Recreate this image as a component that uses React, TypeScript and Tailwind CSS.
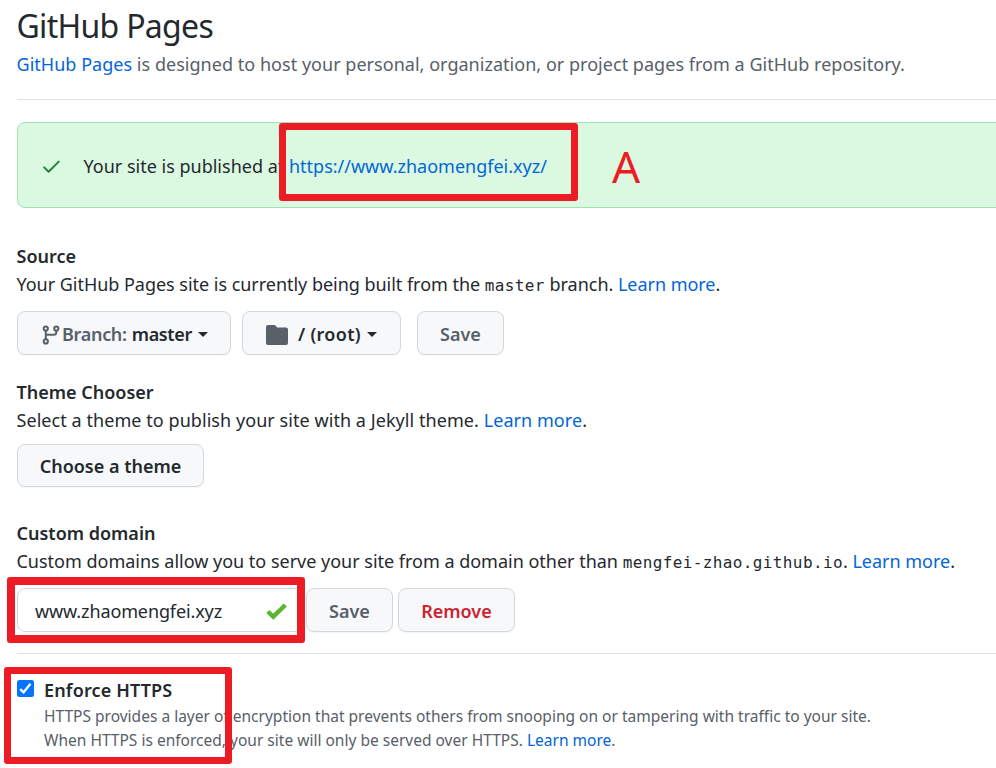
import type { ReactNode } from "react";

function Link({ children }: { children: ReactNode }) {
  return <a className="text-[#0366d6]">{children}</a>;
}

function Code({ children }: { children: ReactNode }) {
  return (
    <code className="font-['DejaVu_Sans_Mono',monospace] text-[16px] leading-none tracking-[0.38px]">{children}</code>
  );
}

function Button({ className, children }: { className: string; children: ReactNode }) {
  return (
    <button
      className={`flex shrink-0 items-center rounded-lg border border-[#d5d8db] bg-[#f6f8fa] font-semibold whitespace-nowrap shadow-[0_1px_0_rgba(27,31,35,0.04)] ${className}`}
    >
      {children}
    </button>
  );
}

function Caret({ className }: { className: string }) {
  return (
    <span
      className={`h-0 w-0 border-x-[5.5px] border-t-[5.5px] border-x-transparent border-t-[#24292e] ${className}`}
    />
  );
}

function Frame({ className }: { className: string }) {
  return <div className={`pointer-events-none absolute rounded-[3px] border-[#ed1c24] ${className}`} />;
}

export default function App() {
  return (
    <div className="relative h-[768px] w-[996px] overflow-hidden bg-white pl-[16.5px] font-['Noto_Sans',sans-serif] text-[18px] leading-7 whitespace-nowrap text-[#24292e]">
      <h2 className="pt-1.5 text-[32px] leading-10 tracking-[-0.7px]">GitHub Pages</h2>
      <p className="mt-1 tracking-[0.03px] text-[#586069]">
        <Link>GitHub Pages</Link> is designed to host your personal, organization, or project pages from a GitHub repository.
      </p>
      <hr className="mt-[21px] ml-[0.5px] border-[#dfe2e5]" />

      <div className="relative mt-[22px] mr-[-10px] ml-[0.5px] flex h-[86px] items-center rounded-lg border border-[#9fe3b0] bg-[#dbf9e1]">
        <svg className="mt-1 ml-[24.5px] h-[14px] w-[17px]" viewBox="0 0 17 14" fill="none" stroke="#22863a" strokeWidth="2" strokeLinecap="round" strokeLinejoin="round">
          <path d="M1.2 7.4 5.6 11.8 15.8 1.6" />
        </svg>
        <p className="mt-0.5 ml-[24px]">
          Your site is published at <Link>https://www.zhaomengfei.xyz/</Link>
        </p>
        <Frame className="top-0 left-[261px] h-[78px] w-[299px] border-[7px]" />
        <span className="absolute top-[13px] left-[594px] text-[44px] leading-[60px] text-[#ed1c24]">A</span>
      </div>

      <section className="mt-[34px]">
        <h3 className="font-semibold">Source</h3>
        <p className="tracking-[-0.03px]">
          Your GitHub Pages site is currently being built from the <Code>master</Code> branch. <Link>Learn more</Link>.
        </p>
        <div className="mt-[13px] ml-[0.5px] flex h-11">
          <Button className="w-[214px] pt-0.5 pl-[24px]">
            <svg className="mt-0.5 h-5 w-[18px] shrink-0" viewBox="0 0 18 20" fill="none" stroke="#586069" strokeWidth="2">
              <circle cx="3.8" cy="3.6" r="2.1" />
              <circle cx="14.3" cy="3.6" r="2.1" />
              <circle cx="3.8" cy="16.4" r="2.1" />
              <path d="M3.8 5.8v8.4M14.3 5.8v1.4q0 2.6-2.6 2.6H3.8" />
            </svg>
            <span className="ml-[2px] text-[#586069] tracking-[-0.3px]">Branch:</span>
            <span className="ml-[5px] tracking-[-0.35px]">master</span>
            <Caret className="ml-[6px]" />
          </Button>
          <Button className="ml-[11px] w-[159px] pt-0.5 pl-[23px]">
            <svg className="mt-0.5 h-5 w-[22px] shrink-0" viewBox="0 0 22 20" fill="#586069">
              <path d="M2 0H8Q9.3 0 10 1L10.7 1.9Q11.1 2.5 12 2.5H20Q22 2.5 22 4.5V18Q22 20 20 20H2Q0 20 0 18V2Q0 0 2 0Z" />
            </svg>
            <span className="ml-[10px] tracking-[0.3px]">/ (root)</span>
            <Caret className="ml-[6px]" />
          </Button>
          <Button className="ml-4 w-[87px] justify-center pt-0.5 text-[#586069]">Save</Button>
        </div>
      </section>

      <section className="mt-[23px]">
        <h3 className="font-semibold">Theme Chooser</h3>
        <p className="tracking-[0.06px]">
          Select a theme to publish your site with a Jekyll theme. <Link>Learn more</Link>.
        </p>
        <div className="mt-[10px] ml-[0.5px] flex h-[43px]">
          <Button className="w-[187px] justify-center">Choose a theme</Button>
        </div>
      </section>

      <section className="mt-8">
        <h3 className="font-semibold">Custom domain</h3>
        <p className="tracking-[-0.01px]">
          Custom domains allow you to serve your site from a domain other than <Code>mengfei-zhao.github.io</Code>. <Link>Learn more</Link>.
        </p>
        <div className="relative mt-[13px] ml-[0.5px] flex h-11">
          <div className="flex w-[285px] items-center rounded-lg border border-[#d1d5da] pt-0.5 pl-[17px]">
            <span className="w-[188px] tracking-[-0.12px]">www.zhaomengfei.xyz</span>
            <svg className="ml-[43px] h-[17px] w-[21px]" viewBox="0 0 21 17" fill="none" stroke="#5cb531" strokeWidth="4.4">
              <path d="M1.8 8.5 7.3 13.7 19.3 2" />
            </svg>
          </div>
          <Button className="ml-1 w-[87px] justify-center pt-0.5 text-[#586069]">Save</Button>
          <Button className="ml-[5px] w-[117px] justify-center pt-0.5 text-[#cb2431]">Remove</Button>
          <Frame className="-top-[11px] -left-[10px] h-[66px] w-[298px] border-8" />
        </div>
      </section>

      <hr className="mt-[21px] ml-[0.5px] border-[#dfe2e5]" />

      <section className="relative mt-[22px] ml-[0.5px] flex">
        <div className="mt-1 flex h-[17px] w-[17px] items-center justify-center rounded-[2.5px] bg-[#0075ff]">
          <svg className="h-[13px] w-[13px]" viewBox="0 0 13 13" fill="none" stroke="white" strokeWidth="2.4">
            <path d="M1.2 7.1 4.6 10.3 11.5 1.8" />
          </svg>
        </div>
        <div className="ml-[10px]">
          <h3 className="font-semibold tracking-[0.15px]">Enforce HTTPS</h3>
          <p className="text-[15.5px] leading-6 tracking-[0.01px] text-[#586069]">
            HTTPS provides a layer of encryption that prevents others from snooping on or tampering with traffic to your site.
            <br />
            When HTTPS is enforced, your site will only be served over HTTPS. <Link>Learn more</Link>.
          </p>
        </div>
        <Frame className="-top-[9px] -left-[13px] h-[97px] w-[228px] border-[7px]" />
      </section>
    </div>
  );
}
